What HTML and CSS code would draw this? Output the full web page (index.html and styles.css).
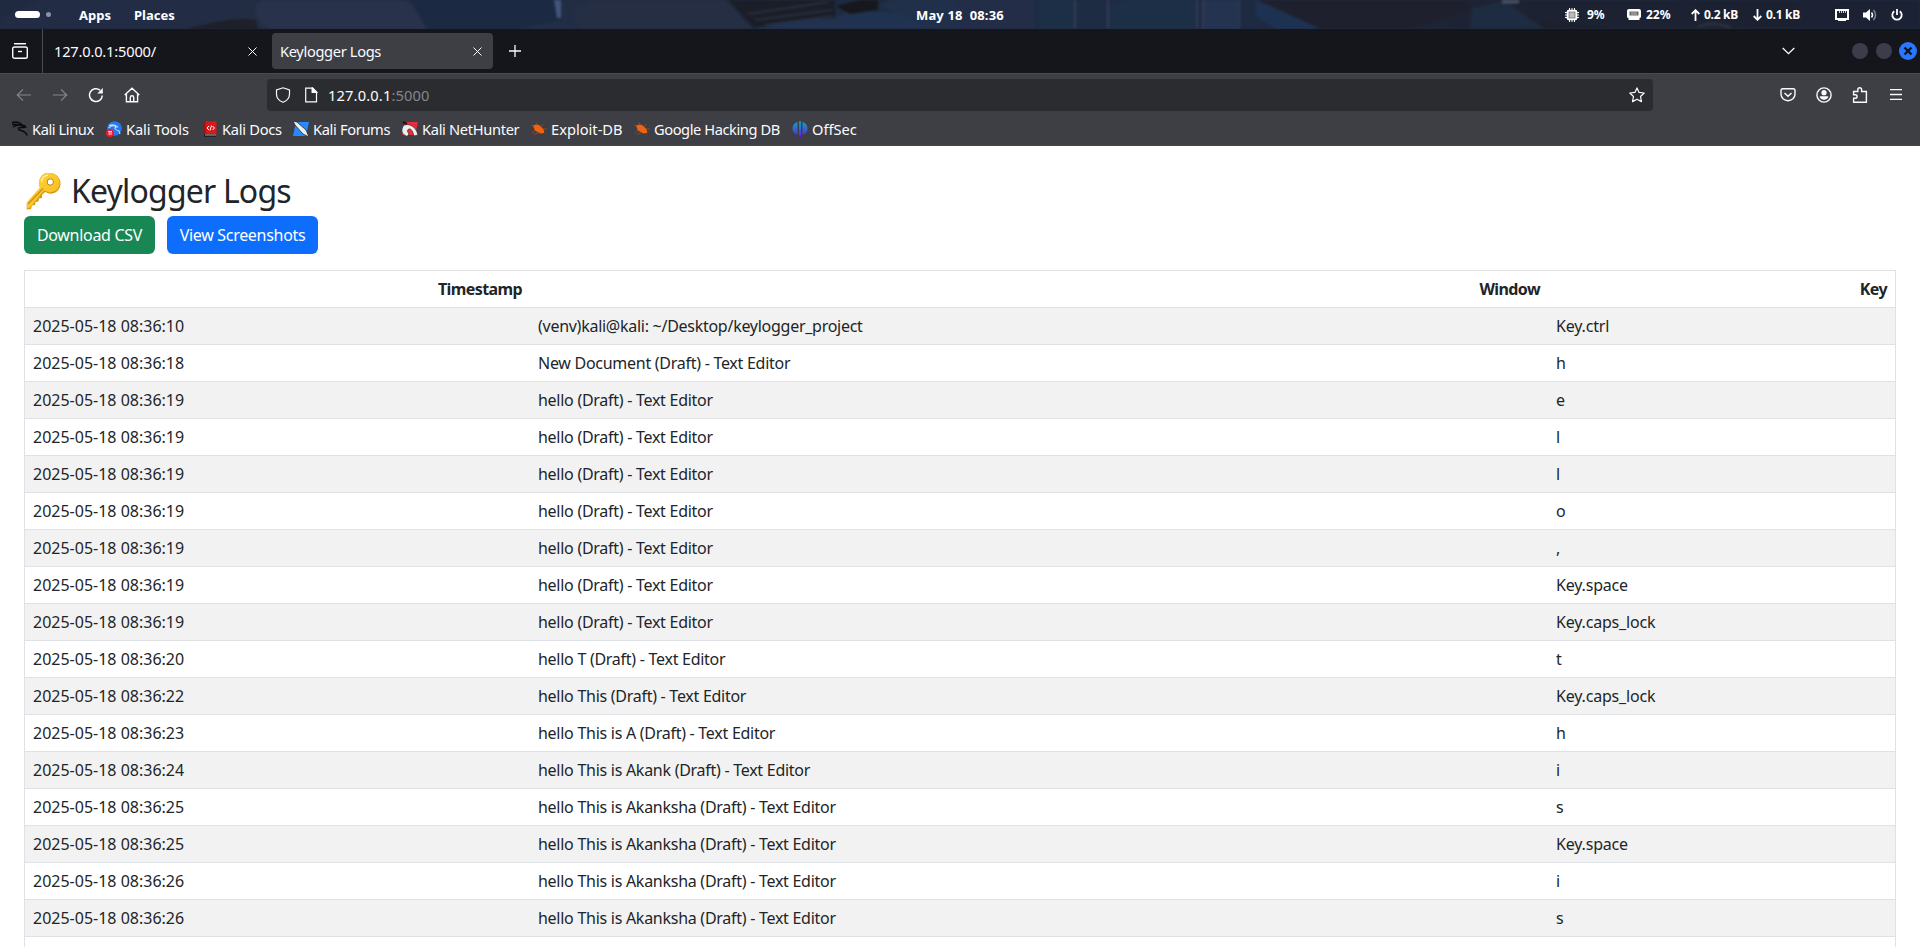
FILE: index.html
```html
<!DOCTYPE html>
<html lang="en">
<head>
<meta charset="utf-8">
<title>Keylogger Logs</title>
<link rel="stylesheet" href="styles.css">
</head>
<body>
<header class="panel">
  <svg class="wallpaper" viewBox="0 0 1920 29" preserveAspectRatio="none">
    <defs>
      <linearGradient id="sky" x1="0" x2="1"><stop offset="0" stop-color="#1f2a40"/><stop offset=".22" stop-color="#253048"/><stop offset=".42" stop-color="#1d2a40"/><stop offset=".62" stop-color="#1e2c45"/><stop offset=".8" stop-color="#1d212e"/><stop offset="1" stop-color="#1c2235"/></linearGradient>
    </defs>
    <rect width="1920" height="29" fill="url(#sky)"/>
    <path d="M0 18 40 0H235L248 16 180 29H0z" fill="#222d45"/>
    <path d="M185 29 215 22Q240 17 256 20L258 29z" fill="#1d2029"/>
    <path d="M262 0H402Q412 2 427 29H270Q246 14 262 0z" fill="#28324b"/>
    <path d="M410 0H560L562 20 520 29H427z" fill="#1b2a42"/>
    <path d="M554 0H561V18H557z" fill="#41557a"/>
    <path d="M573 14 590 0H725L752 29H580z" fill="#262e43"/>
    <path d="M728 0H835V24L810 29H755z" fill="#1b1e28"/>
    <path d="M748 14 828 2M755 20 832 10M765 25 833 16" stroke="#333d50" fill="none"/>
    <path d="M752 29Q790 20 835 18L850 10 920 14 936 29z" fill="#20324f"/>
    <path d="M836 6 860 0H878V10L850 14z" fill="#17181e"/>
    <path d="M890 0H958V29H935L880 6z" fill="#21304a"/>
    <path d="M958 0H1034V29H958z" fill="#232d48"/>
    <path d="M1040 0H1074V29H1040zM1109 8 1125 0H1194V29H1109z" fill="#1d2f47"/>
    <path d="M1075 0V29M1108 0V29M1197 0V29M1203 0V29M1239 0V29" stroke="#333b56" stroke-width="2"/>
    <path d="M1204 0H1239V29H1204z" fill="#243450"/>
    <path d="M1256 0 1320 29H1275L1256 16z" fill="#1d3252"/>
    <path d="M1258 0H1465L1472 10 1410 29H1322z" fill="#1e212d"/>
    <path d="M1472 8 1505 0 1545 29H1470z" fill="#1d2c40"/>
    <path d="M1510 0 1530 20 1620 29H1750L1680 0z" fill="#1c2231"/>
    <path d="M1502 1H1519" stroke="#4b4f63" stroke-width="5"/>
    <path d="M1698 27Q1712 20 1731 28" stroke="#2b323f" stroke-width="2.500" fill="none"/>
  </svg>
  <div class="panel-left"><i class="pill"></i><i class="dot"></i><b class="apps">Apps</b><b>Places</b></div>
  <b class="clock">May 18&nbsp; 08:36</b>
  <div class="panel-right">
    <svg class="cpu" width="14" height="14" viewBox="0 0 14 14"><path d="M4.500 0v14M7 0v14M9.500 0v14M0 4.500h14M0 7h14M0 9.500h14" stroke="#fff"/><rect x="1.700" y="1.700" width="10.600" height="10.600" rx="2" fill="#fff"/><rect x="4" y="4" width="6" height="6" fill="#bbb" stroke="#666" stroke-width=".7"/></svg>
    <b class="cpu-load">9%</b>
    <svg class="ram" width="14" height="12" viewBox="0 0 14 12"><path d="M2 0h10a2 2 0 0 1 2 2v5.500a1.500 1.500 0 0 1-1.500 1.500V11h-11V9A1.500 1.500 0 0 1 0 7.500V2a2 2 0 0 1 2-2z" fill="#fff"/><path d="M2.500 2.500h9v4h-9z" fill="#666"/><path d="M5 2.500v4M7 2.500v4M9 2.500v4" stroke="#bbb"/></svg>
    <b class="ram-load">22%</b>
    <svg class="net" width="9" height="12" viewBox="0 0 9 12"><path d="M4.500 12V1.500M.7 5 4.500 1.200 8.300 5" stroke="#fff" stroke-width="1.800" fill="none"/></svg>
    <b class="up-rate">0.2 kB</b>
    <svg class="net" width="9" height="12" viewBox="0 0 9 12"><path d="M4.500 0v10.500M.7 7 4.500 10.800 8.300 7" stroke="#fff" stroke-width="1.800" fill="none"/></svg>
    <b class="down-rate">0.1 kB</b>
    <svg class="wired" width="14" height="12" viewBox="0 0 14 12"><path d="M1 1h12v9H1z" fill="none" stroke="#fff" stroke-width="2"/><path d="M3 10h8v2H3z" fill="#fff"/><path d="M4.500 2v2M6.500 2v2M8.500 2v2M10.500 2v2" stroke="#ccc"/></svg>
    <svg class="volume" width="14" height="12" viewBox="0 0 14 12"><path d="M0 3.500h3L7 0v12L3 8.500H0z" fill="#fff"/><path d="M8.500 3.500Q10.500 6 8.500 8.500" stroke="#fff" stroke-width="1.500" fill="none"/><path d="M10.500 1Q14.500 6 10.500 11" stroke="#858a95" stroke-width="1.400" fill="none"/></svg>
    <svg class="power" width="12" height="12" viewBox="0 0 12 12"><path d="M3.200 2.200A4.700 4.700 0 1 0 8.800 2.200M6 0v6" fill="none" stroke="#fff" stroke-width="1.800"/></svg>
  </div>
</header>

<div class="tabs">
  <div class="recent"><svg width="16" height="16" viewBox="0 0 16 16" fill="none" stroke="#fbfbfe" stroke-width="1.400"><path d="M2.500.7h11" stroke-linecap="round"/><rect x=".7" y="4" width="14.600" height="11.300" rx="1.800"/><path d="M6 8.500h4"/></svg></div>
  <div class="tab idle"><span>127.0.0.1:5000/</span><svg width="9" height="9" viewBox="0 0 9 9"><path d="M.5.5l8 8M8.500.5l-8 8" stroke="#fbfbfe"/></svg></div>
  <div class="tab active"><span>Keylogger Logs</span><svg width="9" height="9" viewBox="0 0 9 9"><path d="M.5.5l8 8M8.500.5l-8 8" stroke="#fbfbfe"/></svg></div>
  <svg class="plus" width="12" height="12" viewBox="0 0 12 12"><path d="M6 0v12M0 6h12" stroke="#fbfbfe" stroke-width="1.300"/></svg>
  <svg class="chevron" width="13" height="8" viewBox="0 0 13 8"><path d="M.7 1 6.500 6.700 12.300 1" fill="none" stroke="#fbfbfe" stroke-width="1.300"/></svg>
  <i class="win"></i><i class="win"></i>
  <svg class="close" width="18" height="18" viewBox="0 0 18 18"><circle cx="9" cy="9" r="9" fill="#2777ff"/><path d="M5.500 5.500l7 7M12.500 5.500l-7 7" stroke="#11131a" stroke-width="2.400"/></svg>
</div>

<nav class="toolbar">
  <svg class="tool" viewBox="0 0 16 16"><path d="M15 8H1.500M7 2.300 1.300 8 7 13.700" stroke="#85858a"/></svg>
  <svg class="tool" viewBox="0 0 16 16"><path d="M1 8h13.500M9 2.300 14.700 8 9 13.700" stroke="#85858a"/></svg>
  <svg class="tool" viewBox="0 0 16 16"><path d="M14.300 8.500A6.400 6.400 0 1 1 12 3.200" stroke-width="1.500"/><path d="M14.800 1v5.500H9.300z" fill="#fbfbfe" stroke="none"/></svg>
  <svg class="tool" viewBox="0 0 16 16"><path d="M.7 8 8 1.200 15.300 8M2.400 7v7.800h11.200V7M6.300 14.500V10.500a1.700 1.700 0 0 1 3.400 0V14.500" stroke-width="1.400"/></svg>
  <div class="url">
    <svg viewBox="0 0 16 16"><path d="M8 .8 14.500 3V7c0 4-3 7-6.500 8.300C4.500 14 1.500 11 1.500 7V3z"/></svg>
    <svg class="doc" viewBox="0 0 16 16"><path d="M2.700 1.200h7.100l3.700 3.700v9.900H2.700zM9.300 1.200v4h4.200"/><path d="M9.300 1v4.300h4.400z" fill="#fbfbfe"/></svg>
    <span class="address">127.0.0.1<em>:5000</em></span>
    <svg class="star" viewBox="0 0 16 16"><path d="M8 .9l2.100 4.500 5.100.6-3.700 3.500 1 5.100L8 12.200l-4.500 2.400 1-5.100L.8 6l5.100-.6z" stroke-linejoin="round"/></svg>
  </div>
  <div class="tools-right">
    <svg viewBox="0 0 16 16"><path d="M1 3.500Q1 1.700 2.800 1.700h10.400Q15 1.700 15 3.500V7a7 6.700 0 0 1-14 0zM4.500 6 8 9.300 11.500 6" stroke-width="1.400"/></svg>
    <svg viewBox="0 0 16 16"><circle cx="8" cy="8" r="7.100" stroke-width="1.400"/><circle cx="8" cy="5.700" r="2.600" fill="#fbfbfe" stroke="none"/><path d="M3.600 9.300h8.800Q11.800 12.700 8 12.700T3.600 9.300z" fill="#fbfbfe" stroke="none"/></svg>
    <svg viewBox="0 0 16 16"><path d="M1.600 15.200V11.300h1.700a1.800 1.800 0 0 0 0-3.600H1.600V4.500h4.200V2.600a1.900 1.900 0 0 1 3.800 0v1.900h4.800v10.700z" stroke-width="1.400"/></svg>
    <svg viewBox="0 0 16 16"><path d="M2 2.700h12M2 7.500h12M2 12.300h12" stroke-width="1.300"/></svg>
  </div>
</nav>

<nav class="bookmarks">
  <a class="b1"><svg viewBox="0 0 16 16"><path d="M0 1.500Q6-.2 10 4L6.500 4Q2 3 0 3.500M1 6Q5 3 10 4.500l3 1.500-2 .5Q5 6 7 8.700c1 1.200 7 .8 8 5.800" fill="none" stroke="#090a0c" stroke-width="1.500"/><path d="M9 3.500 13 4l1.500 2.500-3-.8z" fill="#090a0c"/></svg><span>Kali Linux</span></a>
  <a class="b2"><svg viewBox="0 0 16 16"><circle cx="8.500" cy="7.500" r="7.300" fill="#2878ef"/><path d="M3 4.500Q9 2.500 12 6.500M2.500 7Q7 3 10 6q-3 2 3 4l1 3" fill="none" stroke="#b9dcff" stroke-width="1.100"/><circle cx="4" cy="12" r="4" fill="#ed1b2e"/><path d="M2 10.500h4M3.200 10.500V14M5 10.500V14" stroke="#fff" stroke-width=".8"/></svg><span>Kali Tools</span></a>
  <a class="b3"><svg viewBox="0 0 16 16"><path d="M2 .3h12.500v13.200H2z" fill="#dc1717"/><path d="M2 .3h1.500v13.200H2z" fill="#941414"/><path d="M2 13.200h12v2.500H2z" fill="#15171c"/><path d="M3 13.500h11v1H3z" fill="#aaa"/><path d="M7 5 5 7l2 2M10.500 5l2 2-2 2M9.500 4.500 8 9.500" stroke="#fff" fill="none"/></svg><span>Kali Docs</span></a>
  <a class="b4"><svg viewBox="0 0 16 16"><path d="M3 1h13l-3 14H0z" fill="#2689ff"/><path d="M0 0 4 1l9 8 3 7-6-3-8-9z" fill="#eee" stroke="#20252d" stroke-width=".8"/></svg><span>Kali Forums</span></a>
  <a class="b5"><svg viewBox="0 0 16 16"><path d="M3 1h13l-3 13H0z" fill="#ed2939"/><path d="M0 8Q1 2 8 4q6 2 8 10l-4 1Q10 7 7 8q-3 1 0 5l-2 2.500Q-1 13 0 8z" fill="#eee" stroke="#282a30" stroke-width=".7"/><path d="M1 1 5 3" stroke="#15171b" stroke-width="2"/></svg><span>Kali NetHunter</span></a>
  <a class="b6"><svg viewBox="0 0 16 16"><path d="M2 5Q4 2.500 8 4l4.500 4 .8 4-4 .5L4 9.500z" fill="#f0620f"/><path d="M3 5 0 4M6 4 5 1.500M10 5.500l2.500-2M13 8h3M4 9 1 12M7 12l-4 1.500" stroke="#a34b1d" stroke-width=".8"/></svg><span>Exploit-DB</span></a>
  <a class="b7"><svg viewBox="0 0 16 16"><path d="M2 5Q4 2.500 8 4l4.500 4 .8 4-4 .5L4 9.500z" fill="#f0620f"/><path d="M3 5 0 4M6 4 5 1.500M10 5.500l2.500-2M13 8h3M4 9 1 12M7 12l-4 1.500" stroke="#a34b1d" stroke-width=".8"/></svg><span>Google Hacking DB</span></a>
  <a class="b8"><svg viewBox="0 0 16 16"><defs><linearGradient id="off" x2="0" y2="1"><stop stop-color="#11a5bd"/><stop offset="1" stop-color="#5b22df"/></linearGradient></defs><path d="M5.500.8V14Q.5 12 .5 7.500T5.500.8zM7 .3h2V16H7zM10.500.8V14q5-2 5-6.500t-5-6.700z" fill="url(#off)"/></svg><span>OffSec</span></a>
</nav>

<main class="page">
  <h2><svg class="key" viewBox="0 0 36 38"><defs><linearGradient id="gold" x2="1" y2="1"><stop stop-color="#ffd43b"/><stop offset="1" stop-color="#f9b91d"/></linearGradient></defs><path d="M13.500 8C15 2 20 .5 25 1c6 .7 10 6 9.500 11.500-.6 6-6 10-11.500 9L19 20l-3 3v3l-3 .5-.5 3-3 .5-.5 3-3 .5L5 37 .8 37.500V31L14 16Q12 12 13.500 8z" fill="#d69b12"/><path d="M13.500 8C15 2 20 .5 25 1c5.500.7 9 5.500 8.500 11-.6 5.500-6 9-11 8L18 18.500 4 35.500.8 36.500V30.500L14 15.500Q12 12 13.500 8z" fill="url(#gold)"/><path d="M2 32 17 16.500" stroke="#c7921b" stroke-width="1.300"/><path d="M15.500 10Q16 4 22 3" stroke="#ffee9b" stroke-width="1.500" fill="none"/><circle cx="24.300" cy="10" r="3.200" fill="#fff" stroke="#b98010" stroke-width="1"/></svg><span>Keylogger Logs</span></h2>
  <div class="actions"><a class="btn green"><span>Download CSV</span></a><a class="btn blue"><span>View Screenshots</span></a></div>
  <table>
    <colgroup><col class="c1"><col class="c2"><col></colgroup>
    <thead><tr><th>Timestamp</th><th>Window</th><th>Key</th></tr></thead>
    <tbody>
      <tr><td>2025-05-18 08:36:10</td><td>(venv)kali@kali: ~/Desktop/keylogger_project</td><td>Key.ctrl</td></tr>
      <tr><td>2025-05-18 08:36:18</td><td>New Document (Draft) - Text Editor</td><td>h</td></tr>
      <tr><td>2025-05-18 08:36:19</td><td>hello (Draft) - Text Editor</td><td>e</td></tr>
      <tr><td>2025-05-18 08:36:19</td><td>hello (Draft) - Text Editor</td><td>l</td></tr>
      <tr><td>2025-05-18 08:36:19</td><td>hello (Draft) - Text Editor</td><td>l</td></tr>
      <tr><td>2025-05-18 08:36:19</td><td>hello (Draft) - Text Editor</td><td>o</td></tr>
      <tr><td>2025-05-18 08:36:19</td><td>hello (Draft) - Text Editor</td><td>,</td></tr>
      <tr><td>2025-05-18 08:36:19</td><td>hello (Draft) - Text Editor</td><td>Key.space</td></tr>
      <tr><td>2025-05-18 08:36:19</td><td>hello (Draft) - Text Editor</td><td>Key.caps_lock</td></tr>
      <tr><td>2025-05-18 08:36:20</td><td>hello T (Draft) - Text Editor</td><td>t</td></tr>
      <tr><td>2025-05-18 08:36:22</td><td>hello This (Draft) - Text Editor</td><td>Key.caps_lock</td></tr>
      <tr><td>2025-05-18 08:36:23</td><td>hello This is A (Draft) - Text Editor</td><td>h</td></tr>
      <tr><td>2025-05-18 08:36:24</td><td>hello This is Akank (Draft) - Text Editor</td><td>i</td></tr>
      <tr><td>2025-05-18 08:36:25</td><td>hello This is Akanksha (Draft) - Text Editor</td><td>s</td></tr>
      <tr><td>2025-05-18 08:36:25</td><td>hello This is Akanksha (Draft) - Text Editor</td><td>Key.space</td></tr>
      <tr><td>2025-05-18 08:36:26</td><td>hello This is Akanksha (Draft) - Text Editor</td><td>i</td></tr>
      <tr><td>2025-05-18 08:36:26</td><td>hello This is Akanksha (Draft) - Text Editor</td><td>s</td></tr>
      <tr class="last"><td></td><td></td><td></td></tr>
    </tbody>
  </table>
</main>
</body>
</html>
```
FILE: styles.css
```css
* { box-sizing: border-box; }
html, body { height: 947px; overflow: hidden; }
body { margin: 0; background: #fff; color: #212529; font-family: "Noto Sans", sans-serif; font-size: 16px; display: flex; flex-direction: column; }
svg, i { flex: none; display: block; }
span, b { white-space: nowrap; }

.panel { position: relative; flex: none; height: 29px; background: #1f2a40; color: #fff; font-size: 13px; overflow: hidden; display: flex; justify-content: space-between; align-items: center; }
.panel b { font-weight: 700; line-height: 29px; height: 29px; position: relative; top: 1px; }
.panel .panel-right b { top: 0; }
.wallpaper { position: absolute; inset: 0; width: 1920px; height: 29px; filter: blur(1px); }
.panel-left, .panel-right { position: relative; display: flex; align-items: center; height: 29px; }
.panel-left { width: 916px; padding-left: 15px; }
.pill { width: 25px; height: 7px; border-radius: 4px; background: #fff; }
.dot { width: 5px; height: 5px; border-radius: 50%; background: #8d929e; margin-left: 6px; }
.panel .apps { margin-left: 28px; width: 55px; }
.panel .clock { width: 90px; letter-spacing: .15px; }
.panel-right { width: 914px; padding-left: 559px; font-size: 12px; }
.cpu { margin-right: 8px; } .cpu-load { width: 40px; }
.ram { margin-right: 5px; } .ram-load { width: 45px; }
.net { margin-right: 4px; } .up-rate { width: 49px; letter-spacing: -.3px; } .down-rate { width: 69px; letter-spacing: -.3px; }
.wired { margin-right: 14px; } .volume { margin-right: 14px; }

.tabs { flex: none; height: 44px; background: #15161b; color: #fbfbfe; font-size: 14.67px; letter-spacing: -.35px; display: flex; align-items: center; }
.recent { width: 43px; height: 44px; border-right: 1px solid #4b4c51; padding: 14px 0 0 12px; }
.tab { width: 221px; height: 36px; margin-left: 4px; padding: 0 11px 0 8px; display: flex; align-items: center; justify-content: space-between; border-radius: 4px; }
.tab.idle { padding-left: 7px; letter-spacing: -.2px; }
.tab.active { background: #3e3f44; }
.plus { margin-left: 16px; }
.chevron { margin-left: 1261px; margin-right: 57px; }
.win { width: 16px; height: 16px; border-radius: 50%; background: #3b3d4c; margin-right: 8px; }
.close { margin-left: -1px; }

.toolbar { flex: none; height: 42px; background: #3e3f44; border-top: 1px solid #49494f; display: flex; align-items: center; padding-left: 16px; }
.toolbar svg { width: 16px; height: 16px; fill: none; stroke: #fbfbfe; stroke-width: 1.2; }
.toolbar .tool { margin-right: 20px; }
.url { width: 1386px; height: 32px; margin-left: 107px; background: #2b2c30; border-radius: 4px; display: flex; align-items: center; padding: 0 8px; color: #fbfbfe; font-size: 14.67px; letter-spacing: .15px; }
.url svg { margin-right: 12px; }
.url .doc { margin-right: 9px; }
.address { flex: 1; }
.address em { color: #85868b; font-style: normal; }
.url .star { margin-right: 0; }
.tools-right { display: flex; gap: 20px; margin-left: 127px; }

.bookmarks { flex: none; height: 31px; background: #3e3f44; border-bottom: 1px solid #4a454d; display: flex; padding-left: 12px; color: #fbfbfe; font-size: 14.67px; }
.bookmarks a { display: flex; align-items: center; flex: none; height: 28px; }
.bookmarks svg { width: 16px; height: 16px; margin-right: 4px; }
.b1 { width: 94px; letter-spacing: -.42px; }
.b2 { width: 96px; letter-spacing: -.15px; }
.b3 { width: 91px; letter-spacing: -.28px; }
.b4 { width: 109px; letter-spacing: -.35px; }
.b5 { width: 129px; letter-spacing: -.33px; }
.b6 { width: 103px; }
.b7 { width: 158px; letter-spacing: -.43px; }

.page { flex: 1; overflow: hidden; padding: 24px 24px 0; }
h2 { margin: 0 0 8px; height: 38px; font-size: 32px; font-weight: 400; line-height: 42px; letter-spacing: -.82px; display: flex; }
.key { width: 36px; height: 38px; margin: 2px 9px 0 2px; }
.actions { display: flex; gap: 12px; margin-bottom: 16px; letter-spacing: -.3px; }
.btn { height: 38px; border-radius: 6px; color: #fff; display: flex; align-items: center; justify-content: center; }
.green { width: 131px; background: #198754; } .blue { width: 151px; background: #0d6efd; }
table { width: 1872px; table-layout: fixed; border-collapse: collapse; border: 1px solid #dee2e6; }
.c1 { width: 505.5px; } .c2 { width: 1018px; }
tr { height: 37px; border-bottom: 1px solid #dee2e6; }
th, td { padding: 0 8px; white-space: nowrap; text-align: left; }
th { text-align: right; font-weight: 700; letter-spacing: -.6px; }
td:nth-child(2) { letter-spacing: -.27px; }
td:nth-child(3) { letter-spacing: -.19px; }
tbody tr:nth-child(odd) { background: #f2f2f2; }
tbody tr.last { background: #fff; }
```
